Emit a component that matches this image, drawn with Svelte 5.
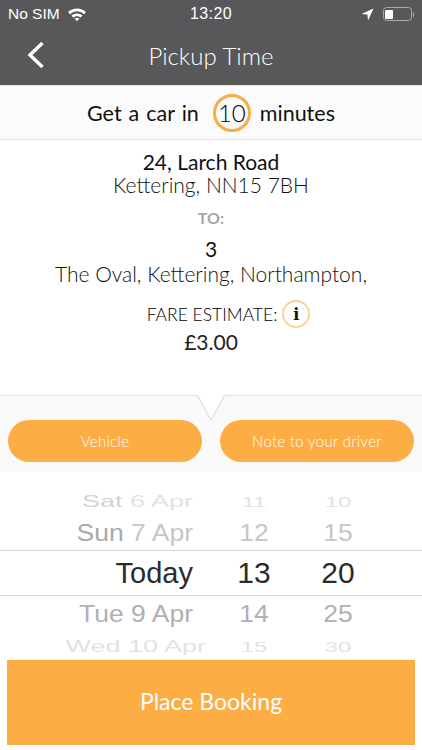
<script>
  const rows = [
    { day: "Sat", date: "6 Apr", hour: "11", min: "10", kind: "far-top" },
    { day: "Sun", date: "7 Apr", hour: "12", min: "15", kind: "near-top" },
    { day: "", date: "Today", hour: "13", min: "20", kind: "current" },
    { day: "Tue", date: "9 Apr", hour: "14", min: "25", kind: "near-bottom" },
    { day: "Wed", date: "10 Apr", hour: "15", min: "30", kind: "far-bottom" },
  ];
</script>

<div class="page">
  <header class="top">
    <div class="status">
      <div class="status-left">
        <span>No SIM</span>
        <svg width="20" height="14" viewBox="0 0 20 14">
          <path d="M1 5 A13 13 0 0 1 19 5 L17 7.2 A10 10 0 0 0 3 7.2 Z" fill="#fff" />
          <path d="M4.4 8.6 A8.2 8.2 0 0 1 15.6 8.6 L13.6 10.6 A5.4 5.4 0 0 0 6.4 10.6 Z" fill="#fff" />
          <path d="M7.6 11.8 A3.6 3.6 0 0 1 12.4 11.8 L10 14 Z" fill="#fff" />
        </svg>
      </div>
      <span class="clock">13:20</span>
      <div class="status-right">
        <svg width="13" height="13" viewBox="0 0 13 13">
          <path d="M12.5 0.5 L0.5 6 L6.4 6.6 L7 12.5 Z" fill="#fff" />
        </svg>
        <div class="battery"><div class="battery-fill"></div></div>
        <div class="battery-tip"></div>
      </div>
    </div>
    <div class="nav">
      <svg class="back" width="20" height="30" viewBox="0 0 20 30">
        <path d="M16.5 3 L4 15 L16.5 27" fill="none" stroke="#fff" stroke-width="3.4" />
      </svg>
      <h1>Pickup Time</h1>
    </div>
  </header>

  <div class="eta">
    <span>Get a car in</span>
    <span class="eta-num">10</span>
    <span>minutes</span>
  </div>

  <section class="details">
    <div class="strong">24, Larch Road</div>
    <div class="light">Kettering, NN15 7BH</div>
    <div class="to">TO:</div>
    <div class="strong dest">3</div>
    <div class="light">The Oval, Kettering, Northampton,</div>
    <div class="fare">
      <span>FARE ESTIMATE:</span>
      <span class="info">i</span>
    </div>
    <div class="price">£3.00</div>
  </section>

  <section class="options">
    <svg class="notch" width="30" height="28" viewBox="0 0 30 28">
      <path d="M1 0 L15 25 L29 0 Z" fill="#fff" />
      <path d="M1 0 L15 25 L29 0" fill="none" stroke="#e3e3e5" stroke-width="1.5" />
    </svg>
    <button>Vehicle</button>
    <button>Note to your driver</button>
  </section>

  <section class="picker">
    {#each rows as row}
      <div class="row {row.kind}">
        <span class="date"><span class="day">{row.day}</span> {row.date}</span>
        <span class="num">{row.hour}</span>
        <span class="num">{row.min}</span>
      </div>
    {/each}
  </section>

  <button class="book">Place Booking</button>
</div>

<style>
  :global(body) {
    background: #fff;
  }

  .page {
    width: 422px;
    height: 750px;
    overflow: hidden;
    display: flex;
    flex-direction: column;
    font-family: Lato, "Open Sans", sans-serif;
    color: #1c1c1e;
  }

  .top {
    height: 85px;
    background: #58585a;
    color: #fff;
    flex: none;
  }

  .status {
    height: 28px;
    padding: 0 8px;
    display: grid;
    grid-template-columns: 1fr auto 1fr;
    align-items: center;
    font-family: "Liberation Sans", sans-serif;
    font-size: 15.5px;
  }

  .status-left {
    display: flex;
    align-items: center;
    gap: 7px;
  }

  .clock {
    font-size: 16px;
    letter-spacing: 0.4px;
  }

  .status-right {
    display: flex;
    justify-content: flex-end;
    align-items: center;
  }

  .battery {
    margin-left: 9px;
    width: 29px;
    height: 14px;
    box-sizing: border-box;
    border: 1px solid #a9a9ab;
    border-radius: 3.5px;
    padding: 1.5px;
  }

  .battery-fill {
    width: 8px;
    height: 100%;
    background: #fff;
    border-radius: 1px;
  }

  .battery-tip {
    width: 1.5px;
    height: 5px;
    margin-left: 1px;
    background: #a9a9ab;
    border-radius: 0 1px 1px 0;
  }

  .nav {
    position: relative;
    height: 57px;
    box-sizing: border-box;
    padding-bottom: 3px;
    display: flex;
    align-items: center;
    justify-content: center;
  }

  .back {
    position: absolute;
    left: 26px;
    top: 12px;
  }

  h1 {
    margin: 0;
    font-size: 24px;
    font-weight: 300;
    color: #fff;
  }

  .eta {
    height: 55px;
    flex: none;
    box-sizing: border-box;
    background: #fbfbfb;
    border-top: 1px solid #e9e9e9;
    border-bottom: 1px solid #e6e6e8;
    display: flex;
    align-items: center;
    justify-content: center;
    font-size: 21.5px;
    word-spacing: 1.5px;
    color: #111;
  }

  .eta-num {
    width: 38px;
    height: 38px;
    margin: 0 9px 0 14px;
    box-sizing: border-box;
    border: 3px solid #f5ae48;
    border-radius: 50%;
    display: flex;
    align-items: center;
    justify-content: center;
    font-weight: 300;
    font-size: 24px;
    color: #000;
  }

  .details {
    height: 255px;
    flex: none;
    box-sizing: border-box;
    padding-top: 10px;
    display: flex;
    flex-direction: column;
    align-items: center;
    text-align: center;
  }

  .strong {
    font-size: 21px;
    line-height: 24px;
    color: #111;
  }

  .light {
    font-size: 21px;
    line-height: 22px;
    font-weight: 300;
    color: #111;
  }

  .to {
    margin-top: 12px;
    font-size: 16px;
    line-height: 20px;
    font-weight: 700;
    color: #a5a5a7;
  }

  .dest {
    margin: 9px 0 2px;
  }

  .fare {
    margin-top: 15px;
    margin-left: 35px;
    display: flex;
    align-items: center;
    gap: 5px;
    font-size: 17.5px;
    font-weight: 300;
    color: #000;
  }

  .info {
    width: 28px;
    height: 28px;
    box-sizing: border-box;
    border: 2px solid #fbd39b;
    border-radius: 50%;
    display: flex;
    align-items: center;
    justify-content: center;
    font-family: "DejaVu Serif", serif;
    font-weight: 700;
    font-size: 16px;
    color: #111;
  }

  .price {
    margin-top: 2px;
    font-size: 21px;
    line-height: 24px;
    color: #222;
  }

  .options {
    position: relative;
    height: 77px;
    flex: none;
    box-sizing: border-box;
    background: #f9f9f9;
    border-top: 1.5px solid #e3e3e5;
    padding: 24px 8px 10px;
    display: grid;
    grid-template-columns: 194px 194px;
    justify-content: space-between;
  }

  .notch {
    position: absolute;
    left: 196px;
    top: -1px;
  }

  button {
    border: 0;
    font-family: inherit;
    color: #fff;
    background: #fcae45;
  }

  .options button {
    position: relative;
    height: 42px;
    border-radius: 21px;
    font-size: 14.8px;
    font-weight: 300;
    letter-spacing: 0.4px;
  }

  .picker {
    height: 188px;
    flex: none;
    display: flex;
    flex-direction: column;
    font-family: "Liberation Sans", sans-serif;
    padding-top: 14px;
    box-sizing: border-box;
  }

  .row {
    display: grid;
    grid-template-columns: 193px 122px 46px;
    align-items: center;
    flex: none;
  }

  .date {
    text-align: right;
    white-space: nowrap;
  }

  .num {
    text-align: center;
  }

  .far-top,
  .far-bottom {
    font-size: 24px;
    color: #e2e2e4;
  }

  .near-top .day {
    color: #a9a9ab;
  }

  .far-top .day {
    color: #d2d2d4;
  }

  .far-top {
    height: 31px;
    transform: scaleY(0.6);
  }

  .far-top .date {
    font-size: 27px;
  }

  .far-bottom {
    height: 28px;
    transform: scaleY(0.62);
  }

  .far-bottom .date {
    font-size: 27px;
    transform: translateX(13px);
  }

  .near-top,
  .near-bottom {
    font-size: 26.5px;
    color: #c6c6c8;
    transform: scaleY(0.92);
  }

  .near-top {
    height: 33px;
  }

  .near-bottom {
    height: 36px;
    color: #b0b0b2;
  }

  .current {
    height: 46px;
    border-top: 1px solid #d6d6d8;
    border-bottom: 1px solid #d6d6d8;
    box-sizing: border-box;
    font-size: 30px;
    color: #2b2b2d;
  }

  .current .date {
    font-size: 29px;
  }

  .book {
    flex: none;
    width: 408px;
    height: 85px;
    margin: 0 0 5px 7px;
    padding-bottom: 4px;
    font-size: 23px;
  }
</style>
